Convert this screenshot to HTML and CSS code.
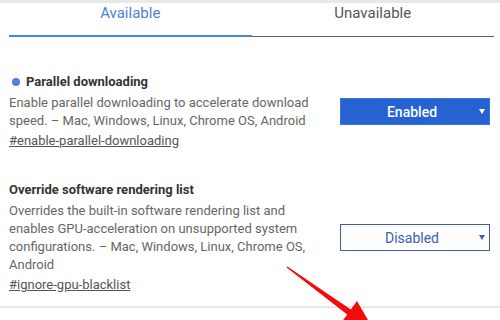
FILE: index.html
```html
<!DOCTYPE html>
<html>
<head>
	<title>Experiments</title>
	<meta charset="utf-8">
	<link rel="stylesheet" href="styles.css">
</head>
<body>
<div class="page">
	<!-- tabs -->
	<div class="tabs">
		<div class="tab active">Available</div>
		<div class="tab">Unavailable</div>
	</div>

	<div class="list">
		<div class="experiment">
			<div class="exp-text">
				<h3 class="exp-name"><span class="dot"></span>Parallel downloading</h3>
				<p class="exp-desc">Enable parallel downloading to accelerate download speed. – Mac, Windows, Linux, Chrome OS, Android</p>
				<a class="exp-link" href="javascript:;">#enable-parallel-downloading</a>
			</div>
			<div class="select on">
				<span class="select-val">Enabled</span>
				<span class="select-arrow"></span>
			</div>
		</div>

		<div class="experiment">
			<div class="exp-text">
				<h3 class="exp-name">Override software rendering list</h3>
				<p class="exp-desc">Overrides the built-in software rendering list and enables GPU-acceleration on unsupported system configurations. – Mac, Windows, Linux, Chrome OS, Android</p>
				<a class="exp-link" href="javascript:;">#ignore-gpu-blacklist</a>
			</div>
			<div class="select">
				<span class="select-val">Disabled</span>
				<span class="select-arrow"></span>
			</div>
		</div>
	</div>
</div>

<!-- red arrow drawn over the screenshot -->
<svg class="pointer" width="500" height="320" viewBox="0 0 500 320">
	<polygon fill="#f20d0d" points="286.6,267.5 347.2,314.4 341,323 372,327 357,301 350.8,309.6 287.4,266.5"/>
</svg>
</body>
</html>
```

FILE: styles.css
```css
body, h3, p { margin: 0; padding: 0; }
body { background-color: #fff; font-family: Roboto, "Liberation Sans", sans-serif; color: #333; }
a { color: #555; }

.page { border-top: 3px solid #e9e9e9; }

.tabs { display: flex; margin: 0 6px 0 9px; }
.tab { flex: 1; box-sizing: border-box; height: 34px; line-height: 20px; font-size: 15px; text-align: center; color: #555; border-bottom: 1px solid #5c5c5c; }
.tab.active { color: #4f80d8; border-bottom: 2px solid #4a82e0; }

.list { padding-top: 36px; padding-bottom: 12px; border-bottom: 2px solid #e8e8e8; }
.experiment { display: flex; align-items: center; padding: 0 10px 0 9px; font-size: 13px; line-height: 18px; }
.experiment + .experiment { margin-top: 31px; }
.exp-text { width: 316px; }
.exp-name { font-size: 13px; font-weight: 700; color: #333; }
.dot { display: inline-block; width: 8px; height: 8px; margin: 0 6px 0 3px; border-radius: 50%; background-color: #4a80e0; vertical-align: 0; }
.exp-desc { margin-top: 3px; color: #666; }
.exp-link { display: inline-block; margin-top: 2px; color: #555; }

.select { display: flex; align-items: center; box-sizing: border-box; width: 150px; height: 27px; margin-left: auto; padding-right: 4px; font-size: 14px; color: #3a60b0; border: 1px solid #3d5fa8; background-color: #fff; }
.select-val { flex: 1; text-align: center; padding-left: 4px; }
.select-arrow { width: 0; height: 0; border-left: 3px solid transparent; border-right: 3px solid transparent; border-top: 5px solid #3a60b0; }
.select.on { background-color: #2762d2; border-color: #3a72dc; color: #fff; font-weight: 500; }
.select.on .select-arrow { border-top-color: #fff; }

.pointer { position: fixed; top: 0; left: 0; pointer-events: none; }
```
